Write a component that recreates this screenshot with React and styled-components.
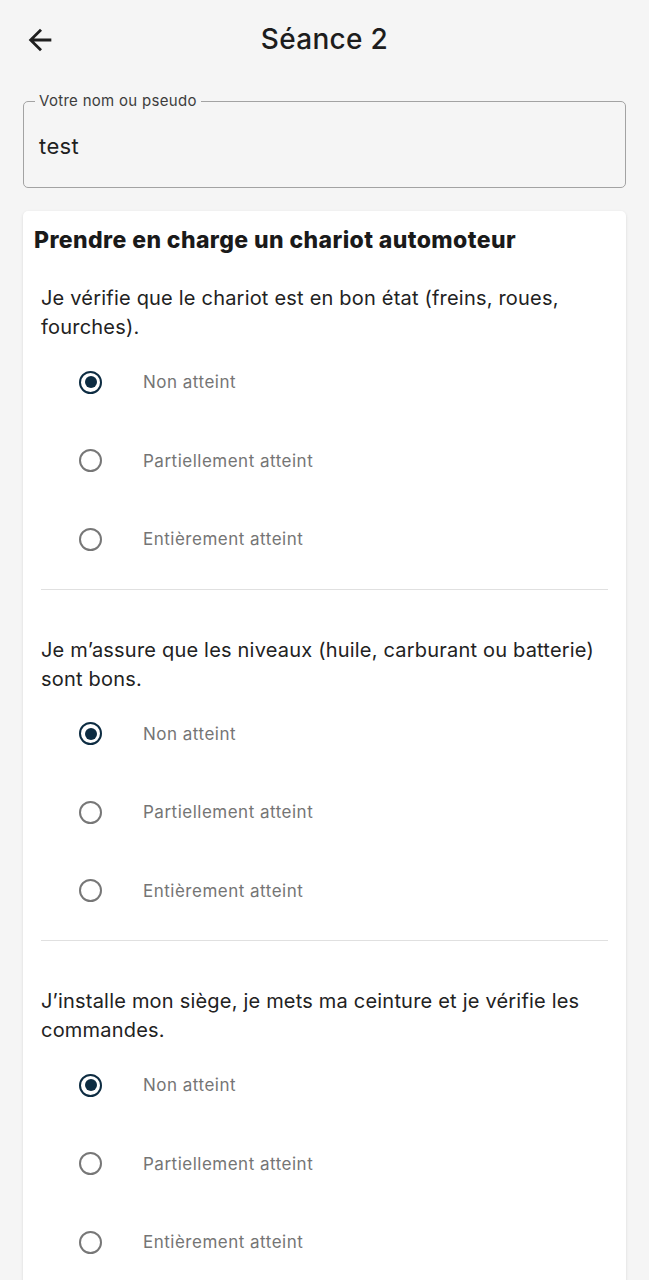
import styled, { createGlobalStyle } from 'styled-components';

const GlobalStyle = createGlobalStyle`
   * {
      box-sizing: border-box;
   }
   body {
      margin: 0;
      background-color: #f5f5f5;
      font-family: 'Inter', 'Noto Sans', sans-serif;
      color: #1f1f1f;
   }
`;

const questions = [
   {
      id: 'etat',
      text: 'Je vérifie que le chariot est en bon état (freins, roues, fourches).',
   },
   {
      id: 'niveaux',
      text: 'Je m’assure que les niveaux (huile, carburant ou batterie) sont bons.',
   },
   {
      id: 'siege',
      text: 'J’installe mon siège, je mets ma ceinture et je vérifie les commandes.',
   },
];

const levels = ['Non atteint', 'Partiellement atteint', 'Entièrement atteint'];

const Page = styled.div`
   padding: 0 23px;
   min-height: 1280px;
`;

const Header = styled.header`
   height: 80px;
   display: grid;
   grid-template-columns: 1fr auto 1fr;
   align-items: center;
`;

const BackButton = styled.button`
   justify-self: start;
   width: 34px;
   height: 34px;
   padding: 0;
   border: none;
   background: none;
   color: #1f1f1f;
   display: flex;
   align-items: center;
   justify-content: center;
   cursor: pointer;
`;

const Title = styled.h1`
   margin: 0;
   font-size: 28px;
   line-height: 34px;
   font-weight: 500;
   letter-spacing: 0.3px;
   color: #1d1d1d;
   transform: translateY(-1px);
`;

const Field = styled.fieldset`
   margin: 13px 0 0;
   padding: 0 11px;
   border: 1.5px solid #a3a3a3;
   border-radius: 5px;
`;

const Legend = styled.legend`
   padding: 0 4px;
   font-size: 15px;
   line-height: 16px;
   letter-spacing: 0.3px;
   color: #3d3d3d;
`;

const Value = styled.div`
   padding: 23px 4px 27px;
   font-size: 22px;
   line-height: 28px;
   letter-spacing: 0.4px;
   color: #1f1f1f;
`;

const Card = styled.section`
   margin-top: 23px;
   padding-top: 15px;
   background-color: #ffffff;
   border-radius: 5px;
   box-shadow: 0 1px 3px rgba(0, 0, 0, 0.12);
`;

const CardTitle = styled.h2`
   margin: 0;
   padding: 0 11px;
   font-size: 23px;
   line-height: 28px;
   font-weight: 800;
   letter-spacing: 0.4px;
   color: #1a1a1a;
`;

const Question = styled.div`
   padding: 0 14px 0 18px;
   &:first-of-type {
      margin-top: 30px;
   }
`;

const QuestionText = styled.p`
   margin: 0;
   font-size: 20px;
   line-height: 29px;
   letter-spacing: 0.2px;
   color: #222222;
`;

const Options = styled.div`
   padding-top: 1px;
   display: flex;
   flex-direction: column;
`;

const Option = styled.label`
   height: 78.5px;
   padding-left: 38px;
   display: flex;
   align-items: center;
   gap: 41px;
   cursor: pointer;
`;

const RadioCircle = styled.span`
   width: 23px;
   height: 23px;
   flex-shrink: 0;
   border-radius: 50%;
   border: 2.5px solid ${(p) => (p.checked ? '#0d2c42' : '#777777')};
   display: flex;
   align-items: center;
   justify-content: center;
   &::after {
      content: '';
      width: 12px;
      height: 12px;
      border-radius: 50%;
      background-color: #0d2c42;
      display: ${(p) => (p.checked ? 'block' : 'none')};
   }
`;

const OptionLabel = styled.span`
   font-size: 17px;
   letter-spacing: 0.5px;
   color: #757575;
`;

const Divider = styled.hr`
   margin: 10px 4px 46px 0;
   border: none;
   border-top: 1px solid #e0e0e0;
`;

function ArrowBack() {
   return (
      <svg width="34" height="34" viewBox="0 0 24 24" fill="currentColor">
         <path d="M20 11H7.83l5.59-5.59L12 4l-8 8 8 8 1.41-1.41L7.83 13H20v-2z" />
      </svg>
   );
}

function App() {
   return (
      <>
         <GlobalStyle />
         <Page>
            <Header>
               <BackButton aria-label="Retour">
                  <ArrowBack />
               </BackButton>
               <Title>Séance 2</Title>
            </Header>
            <Field>
               <Legend>Votre nom ou pseudo</Legend>
               <Value>test</Value>
            </Field>
            <Card>
               <CardTitle>Prendre en charge un chariot automoteur</CardTitle>
               {questions.map((q) => (
                  <Question key={q.id}>
                     <QuestionText>{q.text}</QuestionText>
                     <Options>
                        {levels.map((level, i) => (
                           <Option key={level}>
                              <RadioCircle checked={i === 0} />
                              <OptionLabel>{level}</OptionLabel>
                           </Option>
                        ))}
                     </Options>
                     <Divider />
                  </Question>
               ))}
            </Card>
         </Page>
      </>
   );
}

export default App;
